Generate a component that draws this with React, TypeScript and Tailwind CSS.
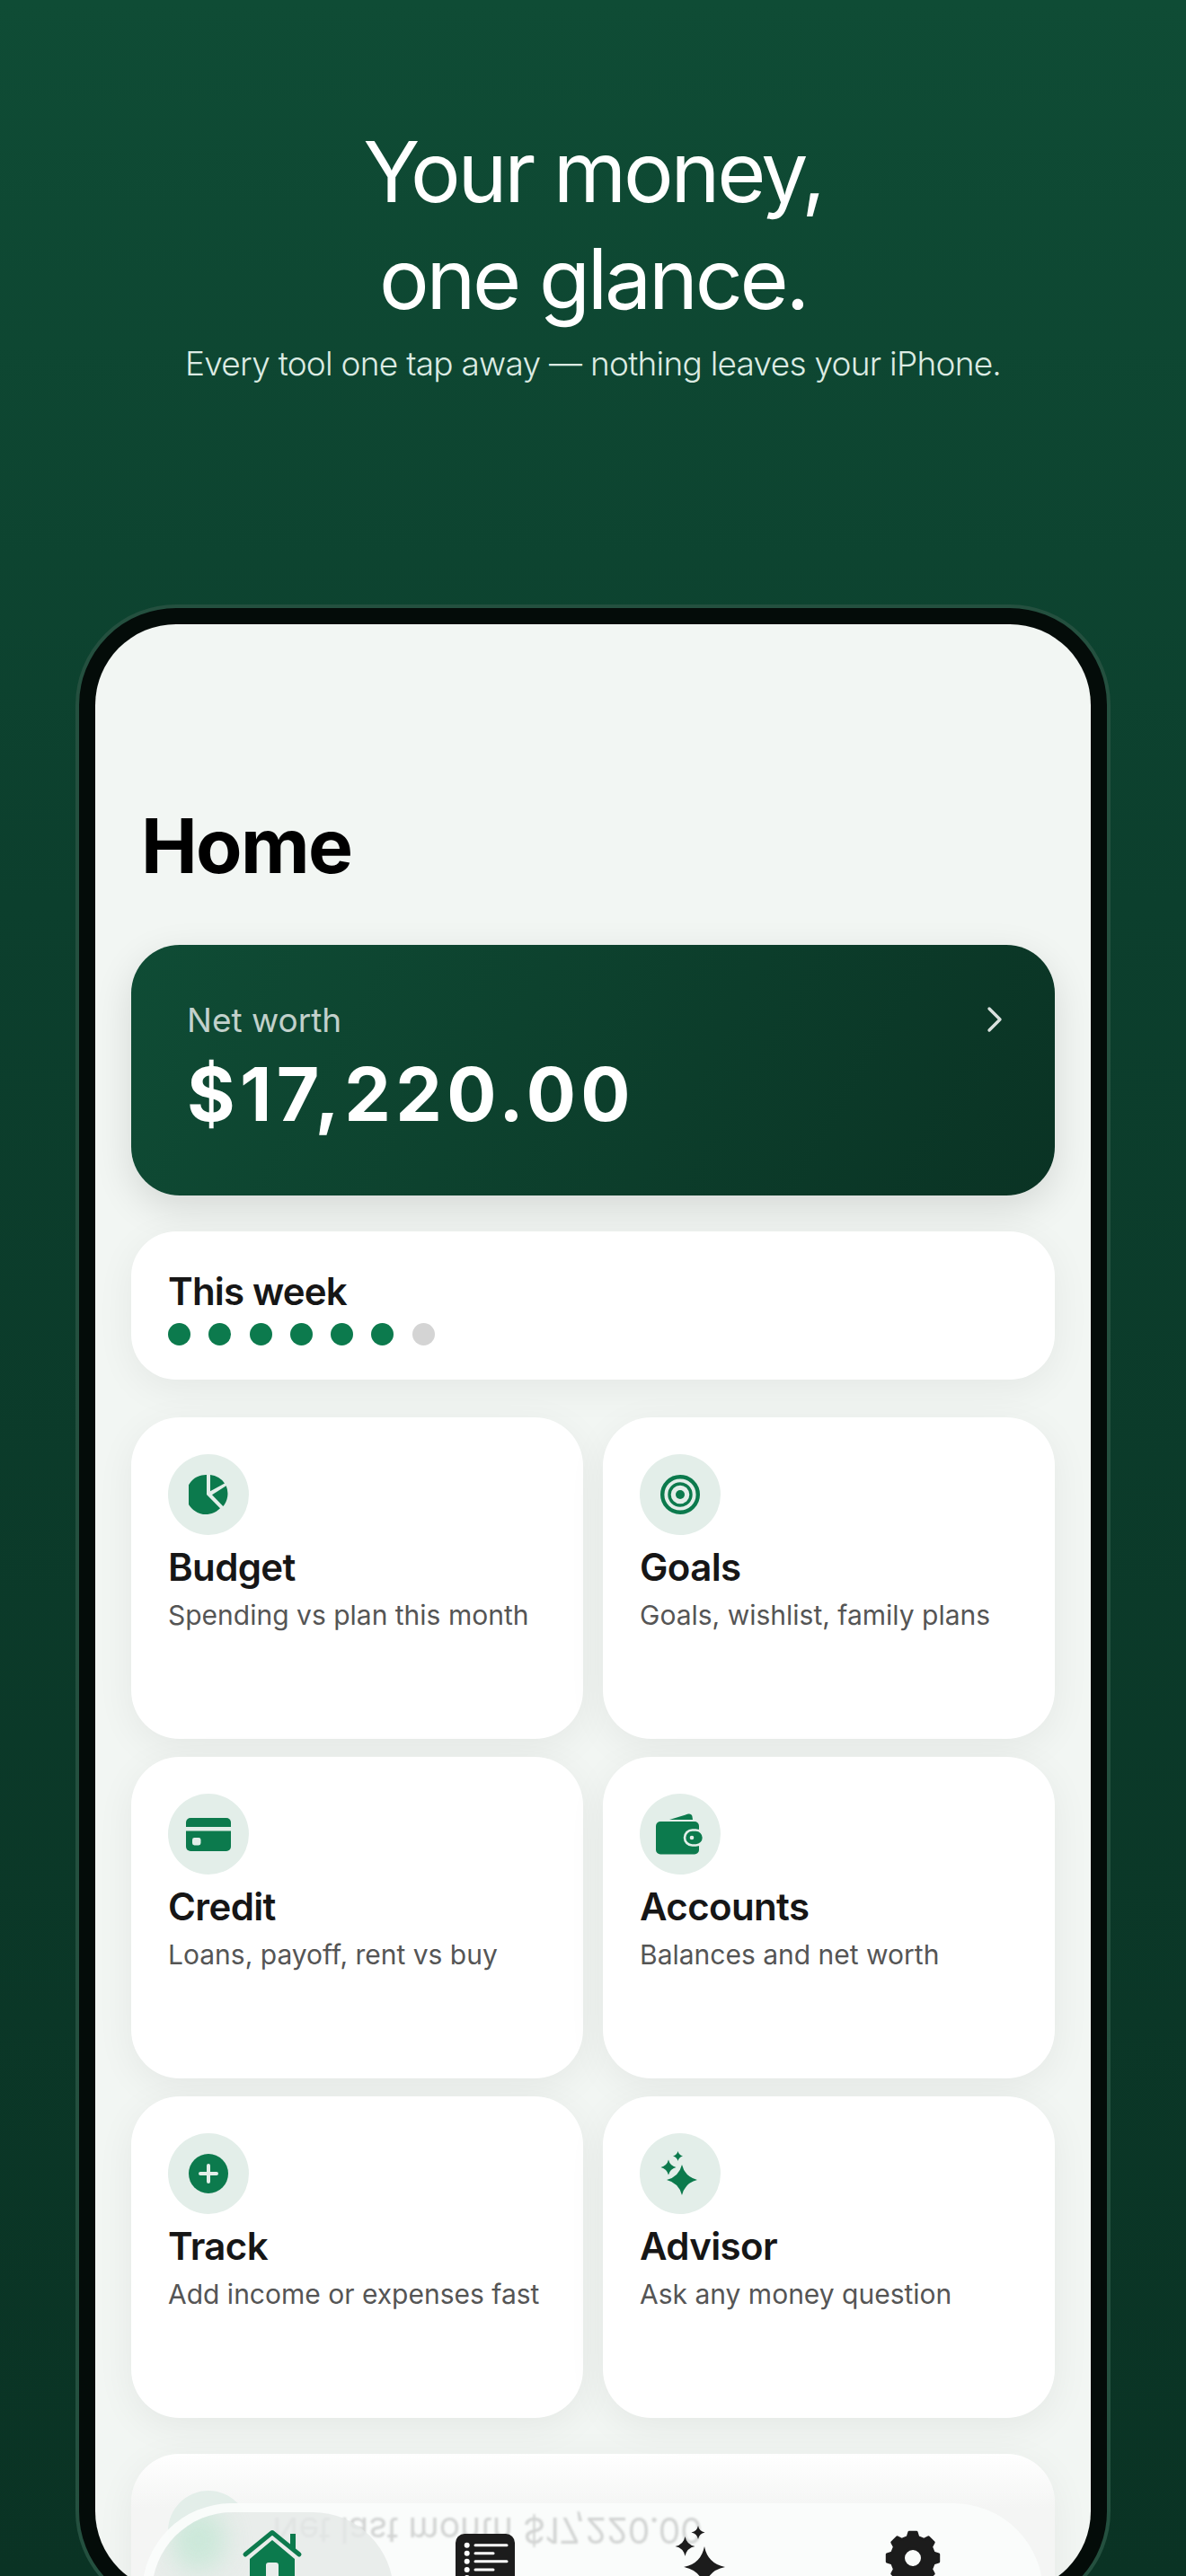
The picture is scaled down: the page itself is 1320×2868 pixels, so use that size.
import React from "react";

const star = (x: number, y: number, r: number, k = 0.14) => {
  const c = r * k;
  return `M${x} ${y - r}Q${x + c} ${y - c} ${x + r} ${y}Q${x + c} ${y + c} ${x} ${y + r}Q${x - c} ${y + c} ${x - r} ${y}Q${x - c} ${y - c} ${x} ${y - r}Z`;
};

const gear = (cx: number, cy: number) => {
  const pts: string[] = [];
  const teeth = 8;
  for (let i = 0; i < teeth; i++) {
    const a = (i / teeth) * Math.PI * 2 - Math.PI / 2;
    const w = Math.PI / teeth;
    const seq: [number, number][] = [
      [24, a - w * 0.62],
      [29, a - w * 0.36],
      [29, a + w * 0.36],
      [24, a + w * 0.62],
    ];
    seq.forEach(([r, t]) => pts.push(`${(cx + r * Math.cos(t)).toFixed(2)} ${(cy + r * Math.sin(t)).toFixed(2)}`));
  }
  return `M${pts.join("L")}Z`;
};

const GREEN = "#0c7a4d";

const Pie = () => (
  <svg width="44" height="44" viewBox="0 0 44 44" fill={GREEN}>
    <path d="M20 0.1V22L35 37.3A22 22 0 1 1 20 0.1Z" />
    <path d="M24 0.1A22 22 0 0 1 40 9.6L24 18.3Z" />
    <path d="M41.7 12.3A22 22 0 0 1 38.3 35L26 22.3Z" />
  </svg>
);

const Target = () => (
  <svg width="44" height="44" viewBox="0 0 44 44" fill="none" stroke={GREEN}>
    <circle cx="22" cy="22" r="19.8" strokeWidth="4.4" />
    <circle cx="22" cy="22" r="12" strokeWidth="3.4" />
    <circle cx="22" cy="22" r="5" fill={GREEN} stroke="none" />
  </svg>
);

const CardIcon = () => (
  <svg width="50" height="37" viewBox="0 0 50 37" fill={GREEN}>
    <path d="M0 10V5a5 5 0 0 1 5-5h40a5 5 0 0 1 5 5v5Z" />
    <path d="M0 14.5h50V32a5 5 0 0 1-5 5H5a5 5 0 0 1-5-5Z" />
    <rect x="7" y="22" width="9.5" height="8.5" rx="2.4" fill="#e3eee9" />
  </svg>
);

const Wallet = () => (
  <svg width="54" height="46" viewBox="0 0 54 46">
    <path d="M15 7L36 .6c2-.6 4 .6 4.4 2.4L41 7Z" fill={GREEN} />
    <rect x="0" y="9" width="48" height="36.5" rx="5" fill={GREEN} />
    <rect x="32" y="18.5" width="21" height="17" rx="8.5" fill={GREEN} stroke="#e3eee9" strokeWidth="2.6" />
    <circle cx="40" cy="27" r="2.3" fill="#e3eee9" />
  </svg>
);

const Plus = () => (
  <svg width="44" height="44" viewBox="0 0 44 44">
    <circle cx="22" cy="22" r="22" fill={GREEN} />
    <path d="M22 13v18M13 22h18" stroke="#e3eee9" strokeWidth="4" strokeLinecap="round" />
  </svg>
);

const Sparkles = () => (
  <svg width="44" height="50" viewBox="0 0 44 50" fill={GREEN}>
    <path d={star(24, 32, 17, 0.2)} />
    <path d={star(9, 18, 8.5, 0.2)} />
    <path d={star(19.5, 5.5, 5.5, 0.2)} />
  </svg>
);

const NavHome = () => (
  <svg width="70" height="70" viewBox="0 0 70 70">
    <path d="M54 5h6v18l-6-5Z" fill={GREEN} />
    <path d="M4 28L34 3.5 64 28" fill="none" stroke={GREEN} strokeWidth="5" strokeLinecap="round" strokeLinejoin="round" />
    <path fillRule="evenodd" d="M34 12L59 33V72H9V33ZM27 72V40a3 3 0 0 1 3-3h8a3 3 0 0 1 3 3V72Z" fill={GREEN} />
  </svg>
);

const NavList = () => (
  <svg width="66" height="66" viewBox="0 0 66 66">
    <rect width="66" height="66" rx="10" fill="#1c1c1c" />
    {[12.7, 21.7, 30.7, 40, 49].map((y, i) => (
      <g key={y}>
        <circle cx="12.7" cy={y} r="3" fill="#fff" />
        <path d={`M22 ${y}H${i % 2 ? 42 : 57}`} stroke="#fff" strokeWidth="3" strokeLinecap="round" />
      </g>
    ))}
  </svg>
);

const NavSparkles = () => (
  <svg width="60" height="70" viewBox="0 0 60 70" fill="#1c1c1c">
    <path d={star(35, 46, 23, 0.16)} />
    <path d={star(13.5, 23, 11, 0.16)} />
    <path d={star(28, 7.5, 7.5, 0.16)} />
  </svg>
);

const NavGear = () => (
  <svg width="64" height="64" viewBox="0 0 64 64">
    <path
      fillRule="evenodd"
      d={gear(32, 32) + "M32 21.5a10.5 10.5 0 1 0 0 21a10.5 10.5 0 1 0 0-21Z"}
      fill="#1c1c1c"
      stroke="#1c1c1c"
      strokeWidth="3"
      strokeLinejoin="round"
    />
  </svg>
);

const tiles: { title: string; sub: string; icon: React.ReactNode }[] = [
  { title: "Budget", sub: "Spending vs plan this month", icon: <Pie /> },
  { title: "Goals", sub: "Goals, wishlist, family plans", icon: <Target /> },
  { title: "Credit", sub: "Loans, payoff, rent vs buy", icon: <CardIcon /> },
  { title: "Accounts", sub: "Balances and net worth", icon: <Wallet /> },
  { title: "Track", sub: "Add income or expenses fast", icon: <Plus /> },
  { title: "Advisor", sub: "Ask any money question", icon: <Sparkles /> },
];

export default function App() {
  return (
    <div className="w-[1320px] h-[2868px] overflow-hidden flex flex-col items-center bg-[linear-gradient(180deg,#0f4c35_0%,#0c3f2d_35%,#0a3324_100%)] font-['Inter','Liberation_Sans',sans-serif]">
      <h1 className="mt-[132px] text-center text-white font-normal text-[93px] leading-[119px] tracking-[-0.035em]">
        Your money,
        <br />
        one glance.
      </h1>
      <p className="mt-[12px] text-center text-[#dcebe3] font-light text-[37px] leading-[46px] tracking-[-0.02em]">
        Every tool one tap away — nothing leaves your iPhone.
      </p>

      <div className="mt-[245px] shrink-0 w-[1152px] h-[2235px] rounded-[112px] border-[4px] border-[#24503f] bg-[#040c09] p-[18px]">
        <div className="relative w-full h-full rounded-[90px] overflow-hidden bg-[#f2f6f3] px-[40px]">
          <h2 className="pt-[197px] pl-[11px] text-black font-bold text-[84px] leading-[100px] tracking-[-0.02em]">Home</h2>

          <div className="mt-[60px] h-[279px] rounded-[54px] bg-[linear-gradient(120deg,#0f4c35,#0a3324)] pl-[62px] pr-[56px] pt-[62px] shadow-[0_14px_44px_rgba(0,0,0,0.12)] flex justify-between items-start">
            <div>
              <div className="text-white/75 text-[37px] leading-[44px]">Net worth</div>
              <div className="mt-[13px] text-white font-bold text-[82px] leading-[96px] tracking-[0.065em]">$17,220.00</div>
            </div>
            <svg width="22" height="30" viewBox="0 0 22 30" className="mt-[6px] -ml-[2px]" fill="none" stroke="#fff" strokeOpacity="0.85" strokeWidth="3.4" strokeLinecap="round" strokeLinejoin="round">
              <path d="M5 3l12 12L5 27" />
            </svg>
          </div>

          <div className="mt-[40px] h-[165px] rounded-[50px] bg-white px-[41px] pt-[42px] shadow-[0_10px_44px_rgba(0,0,0,0.06)]">
            <div className="text-[#161616] font-semibold text-[42px] leading-[50px] tracking-[-0.02em]">This week</div>
            <div className="mt-[10px] flex gap-[20.3px]">
              {[0, 1, 2, 3, 4, 5, 6].map((d) => (
                <span key={d} className={d < 6 ? "w-[25px] h-[25px] rounded-full bg-[#0c7a4d]" : "w-[25px] h-[25px] rounded-full bg-[#d4d4d4]"} />
              ))}
            </div>
          </div>

          <div className="mt-[42px] grid grid-cols-2 gap-x-[22px] gap-y-[20px]">
            {tiles.map((t) => (
              <div key={t.title} className="h-[358px] rounded-[54px] bg-white px-[41px] pt-[41px] shadow-[0_10px_44px_rgba(0,0,0,0.06)]">
                <div className="w-[90px] h-[90px] rounded-full bg-[#e3eee9] flex items-center justify-center">{t.icon}</div>
                <div className="mt-[11px] text-[#161616] font-semibold text-[42px] leading-[50px] tracking-[-0.015em]">{t.title}</div>
                <div className="mt-[10px] text-[#555555] text-[30px] leading-[36px] whitespace-nowrap">{t.sub}</div>
              </div>
            ))}
          </div>

          <div className="mt-[40px] h-[358px] rounded-[54px] bg-[linear-gradient(180deg,#ffffff_0px,#f4f5f4_60px)] px-[41px] pt-[41px] shadow-[0_10px_44px_rgba(0,0,0,0.06)]">
            <div className="w-[90px] h-[90px] rounded-full bg-[#e3eee9]" />
          </div>

          <div className="absolute left-[52px] right-[53px] top-[2092px] h-[200px] rounded-t-[100px] bg-[#fafcfb]/95 overflow-hidden">
            <div className="absolute left-[145px] top-[7px] whitespace-nowrap -scale-y-100 blur-[1px] text-[#d2d4d3] text-[39px] leading-[46px]">
              Net last month $17,220.00
            </div>
            <div className="absolute left-[11px] top-[10px] w-[269px] h-[180px] rounded-t-[90px] bg-[#e5e8e7]/80 overflow-hidden">
              <div className="absolute left-[22px] top-[-4px] w-[60px] h-[70px] rounded-full bg-[#bfe6d2] blur-[14px] opacity-70" />
            </div>
            <div className="absolute left-[111px] top-[29px]"><NavHome /></div>
            <div className="absolute left-[349px] top-[34px]"><NavList /></div>
            <div className="absolute left-[591px] top-[25px]"><NavSparkles /></div>
            <div className="absolute left-[826px] top-[29px]"><NavGear /></div>
          </div>
        </div>
      </div>
    </div>
  );
}
